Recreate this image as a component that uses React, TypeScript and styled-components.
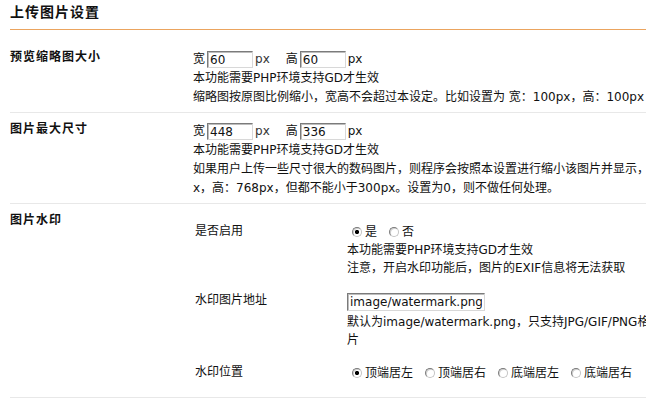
import React from "react";
import styled, { createGlobalStyle } from "styled-components";

const GlobalStyle = createGlobalStyle`
  html, body {
    margin: 0;
    padding: 0;
    background: #ffffff;
    overflow: hidden;
  }
  body {
    font-family: "DejaVu Sans", "Noto Sans CJK SC", sans-serif;
    font-size: 12px;
    color: #111111;
  }
`;

const Page = styled.div`
  width: 771px;
  padding-left: 10px;
`;

const Title = styled.h2`
  margin: 0;
  padding: 2px 0 7px;
  font-size: 14px;
  line-height: 20px;
  letter-spacing: 1px;
  font-weight: bold;
  color: #111111;
  border-bottom: 1px solid #eba45e;
`;

const Table = styled.div`
  margin-top: 11px;
`;

const Row = styled.div<{ $pb?: number }>`
  display: grid;
  grid-template-columns: 183px 588px;
  border-bottom: 1px solid #e8e8e8;
  padding-bottom: ${(p) => p.$pb ?? 0}px;
`;

const Label = styled.div`
  padding-top: 8px;
  font-size: 12px;
  line-height: 16px;
  font-weight: bold;
  letter-spacing: 1px;
  color: #111111;
`;

const Content = styled.div`
  padding: 9px 0 5px;
  line-height: 19px;
  word-break: break-all;
`;

const Line = styled.div`
  line-height: 19px;
`;

const InputLine = styled.div`
  display: flex;
  align-items: center;
  height: 19px;
`;

const TextInput = styled.input<{ $w: number; $h?: number; $flush?: boolean }>`
  box-sizing: border-box;
  width: ${(p) => p.$w}px;
  height: ${(p) => p.$h ?? 17}px;
  margin: 0 2px 0 ${(p) => (p.$flush ? 0 : 2)}px;
  padding: 0 2px;
  font-family: "DejaVu Sans", "Noto Sans CJK SC", sans-serif;
  font-size: 12px;
  color: #111111;
  background: #ffffff;
  border: 1px solid;
  border-color: #7b7b7b #d8d8d8 #d8d8d8 #7b7b7b;
  box-shadow: inset 1px 1px 0 #bdbdbd;
  outline: none;
`;

const Unit = styled.span`
  color: #333333;
  margin-right: 16px;
`;

const Nested = styled.div`
  padding-top: 3px;
`;

const NestedRow = styled.div`
  display: grid;
  grid-template-columns: 154px 342px;
  padding: 7px 0 8px;
`;

const NestedLabel = styled.div`
  padding-left: 2px;
  line-height: 16px;
`;

const NestedValue = styled.div`
  line-height: 18px;
  word-break: normal;
`;

const FieldLine = styled.div`
  display: flex;
  align-items: flex-start;
  height: 21px;
  padding-top: 1px;
  box-sizing: border-box;
`;

const RadioGroup = styled.div`
  display: flex;
  align-items: center;
  height: 18px;
`;

const Option = styled.label`
  display: inline-flex;
  align-items: center;
  margin-right: 7px;
`;

const Radio = styled.input.attrs({ type: "radio" })`
  appearance: none;
  -webkit-appearance: none;
  box-sizing: border-box;
  width: 10px;
  height: 10px;
  margin: 0 3px 0 5px;
  border-radius: 50%;
  border: 1px solid;
  border-color: #7a7a7a #c4c4c4 #c4c4c4 #7a7a7a;
  background: #ffffff;
  box-shadow: inset 1px 1px 0 #d0d0d0;
  &:checked {
    background: radial-gradient(circle, #000000 0 1.8px, #ffffff 2.4px);
  }
`;

export default function App() {
  return (
    <>
      <GlobalStyle />
      <Page>
        <Title>上传图片设置</Title>
        <Table>
          <Row>
            <Label>预览缩略图大小</Label>
            <Content>
              <InputLine>
                宽<TextInput $w={46} defaultValue="60" />
                <Unit>px</Unit>
                高<TextInput $w={46} defaultValue="60" />
                <span>px</span>
              </InputLine>
              <Line>本功能需要PHP环境支持GD才生效</Line>
              <Line>缩略图按原图比例缩小，宽高不会超过本设定。比如设置为 宽：100px，高：100px</Line>
            </Content>
          </Row>
          <Row>
            <Label>图片最大尺寸</Label>
            <Content>
              <InputLine>
                宽<TextInput $w={46} defaultValue="448" />
                <Unit>px</Unit>
                高<TextInput $w={46} defaultValue="336" />
                <span>px</span>
              </InputLine>
              <Line>本功能需要PHP环境支持GD才生效</Line>
              <Line>
                如果用户上传一些尺寸很大的数码图片，则程序会按照本设置进行缩小该图片并显示，比如设置为 宽：1024px，高：768px，但都不能小于300px。设置为0，则不做任何处理。
              </Line>
            </Content>
          </Row>
          <Row $pb={2}>
            <Label>图片水印</Label>
            <Content>
              <Nested>
                <NestedRow>
                  <NestedLabel>是否启用</NestedLabel>
                  <NestedValue>
                    <RadioGroup>
                      <Option>
                        <Radio name="wm" defaultChecked />是
                      </Option>
                      <Option>
                        <Radio name="wm" />否
                      </Option>
                    </RadioGroup>
                    <div>本功能需要PHP环境支持GD才生效</div>
                    <div>注意，开启水印功能后，图片的EXIF信息将无法获取</div>
                  </NestedValue>
                </NestedRow>
                <NestedRow>
                  <NestedLabel>水印图片地址</NestedLabel>
                  <NestedValue>
                    <FieldLine>
                      <TextInput $w={138} $h={18} $flush defaultValue="image/watermark.png" />
                    </FieldLine>
                    <div>默认为image/watermark.png，只支持JPG/GIF/PNG格式的图片</div>
                  </NestedValue>
                </NestedRow>
                <NestedRow>
                  <NestedLabel>水印位置</NestedLabel>
                  <NestedValue>
                    <RadioGroup>
                      <Option>
                        <Radio name="pos" defaultChecked />顶端居左
                      </Option>
                      <Option>
                        <Radio name="pos" />顶端居右
                      </Option>
                      <Option>
                        <Radio name="pos" />底端居左
                      </Option>
                      <Option>
                        <Radio name="pos" />底端居右
                      </Option>
                    </RadioGroup>
                  </NestedValue>
                </NestedRow>
              </Nested>
            </Content>
          </Row>
        </Table>
      </Page>
    </>
  );
}
